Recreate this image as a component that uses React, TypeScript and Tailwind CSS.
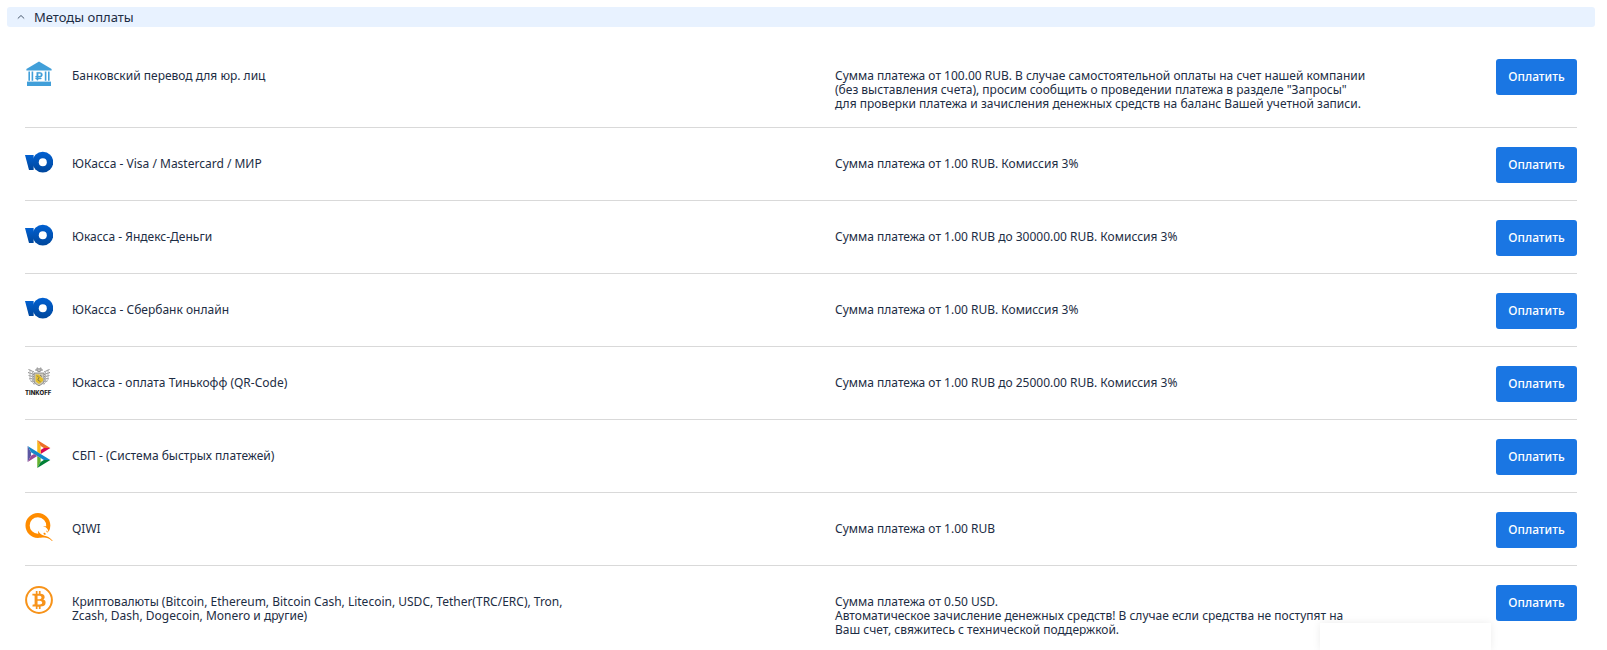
import type { ReactNode } from "react";
import { FaBtc, FaRubleSign } from "react-icons/fa";
import { SiQiwi } from "react-icons/si";

const BankIcon = () => (
    <svg viewBox="0 0 28 28" className="w-7 h-7 text-[#419fd9]" fill="currentColor" aria-hidden="true">
        <path d="M14 1.600 26.600 9v1.400H1.400V9z" />
        <path d="M3.400 11.600H5v9.200H3.400zM6.600 11.600h1.600v9.200H6.600zM19.800 11.600h1.600v9.200h-1.600zM23 11.600h1.600v9.200H23z" />
        <path d="M2 21.600h24V26H2z" />
        <FaRubleSign x={9.4} y={11.6} size={9.2} strokeWidth={20} stroke="currentColor" />
    </svg>
);

const YooIcon = () => (
    <svg viewBox="0 0 28 28" className="w-7 h-7" aria-hidden="true">
        <defs>
            <linearGradient id="yoo" x1="0" y1="0" x2="0" y2="1">
                <stop offset="0" stopColor="#0160d1" />
                <stop offset="1" stopColor="#00479c" />
            </linearGradient>
        </defs>
        <path d="M0 7h8.6v15H4z" fill="url(#yoo)" />
        <circle cx="17.8" cy="14.2" r="10.4" fill="url(#yoo)" />
        <circle cx="17.8" cy="14.2" r="4" fill="#fff" />
    </svg>
);

const TinkoffIcon = () => (
    <svg viewBox="0 0 28 28" className="w-7 h-7" aria-hidden="true">
        <g fill="none" stroke="#8c8c8c" strokeWidth="1">
            <path d="M3.5 2.5 9 5M3 5.5 9 7.5M3.6 8.5 9 9.8M4.4 11.5 9 12M5.8 14.5 10 14M8 17l3-2" />
            <path d="M24.5 2.5 19 5M25 5.5 19 7.5M24.4 8.5 19 9.8M23.6 11.5 19 12M22.2 14.5 18 14M20 17l-3-2" />
            <path d="M5 2.5v10.2l5 5M23 2.5v10.2l-5 5M7.5 4v11M20.5 4v11" stroke="#b5b5b5" />
            <path d="M10 3h8M12 .8l2 1.4 2-1.4v3l-2 1-2-1z" />
        </g>
        <path d="M9 6h10v7.4c0 2.6-2.4 4-5 5.4-2.6-1.4-5-2.8-5-5.4z" fill="#cfcabb" stroke="#7d7d7d" strokeWidth=".8" />
        <path d="M10.6 7.4H14l2.4 3 1.6 1.2V14l-4 3-3.4-2.6z" fill="#e3bf2c" />
        <path d="m12 8.6 2 2-1.200 2.400 2.800 1.800M15 8l2 1.600" fill="none" stroke="#6b6757" strokeWidth=".8" />
        <text x="0" y="27.600" fontFamily="Inter, sans-serif" fontSize="6" fontWeight="800" fill="#222">
            TINKOFF
        </text>
    </svg>
);

const SbpIcon = () => (
    <svg viewBox="0 0 97.3 120" className="w-7 h-7" aria-hidden="true">
        <path fill="#5b57a2" d="M0 26.12l14.532 25.975v15.844L.017 93.863z" />
        <path fill="#d90751" d="M55.797 42.643l13.617-8.346 27.868-.026-41.485 25.414z" />
        <path fill="#fab718" d="M55.72 25.967l.077 34.39-14.566-8.95V0z" />
        <path fill="#ed6f26" d="M97.282 34.271l-27.869.026-13.693-8.33L41.231 0z" />
        <path fill="#63b22f" d="M55.797 94.007V77.322l-14.566-8.78.008 51.458z" />
        <path fill="#1487c9" d="M69.38 85.737L14.531 52.095 0 26.12l97.223 59.583z" />
        <path fill="#017f36" d="M41.24 120l14.556-25.993 13.583-8.27 27.843-.034z" />
        <path fill="#984995" d="M.017 93.863l41.333-25.32-13.896-8.526-12.922 7.922z" />
    </svg>
);

const QiwiIcon = () => <SiQiwi className="w-7 h-7 text-[#ff8c00]" aria-hidden="true" />;

const BitcoinIcon = () => (
    <svg viewBox="0 0 28 28" className="w-7 h-7 text-[#f7931a]" aria-hidden="true">
        <circle cx="14" cy="14" r="12.900" fill="none" stroke="currentColor" strokeWidth="2" />
        <FaBtc x={5} y={5} size={18} />
    </svg>
);

type Method = { icon: ReactNode; name: ReactNode; desc?: ReactNode };

const methods: Method[] = [
    {
        icon: <BankIcon />,
        name: "Банковский перевод для юр. лиц",
        desc: (
            <>
                Сумма платежа от 100.00 RUB. В случае самостоятельной оплаты на счет нашей компании
                <br />
                (без выставления счета), просим сообщить о проведении платежа в разделе "Запросы"
                <br />
                для проверки платежа и зачисления денежных средств на баланс Вашей учетной записи.
            </>
        ),
    },
    { icon: <YooIcon />, name: "ЮКасса - Visa / Mastercard / МИР", desc: "Сумма платежа от 1.00 RUB. Комиссия 3%" },
    { icon: <YooIcon />, name: "Юкасса - Яндекс-Деньги", desc: "Сумма платежа от 1.00 RUB до 30000.00 RUB. Комиссия 3%" },
    { icon: <YooIcon />, name: "ЮКасса - Сбербанк онлайн", desc: "Сумма платежа от 1.00 RUB. Комиссия 3%" },
    { icon: <TinkoffIcon />, name: "Юкасса - оплата Тинькофф (QR-Code)", desc: "Сумма платежа от 1.00 RUB до 25000.00 RUB. Комиссия 3%" },
    { icon: <SbpIcon />, name: "СБП - (Система быстрых платежей)" },
    { icon: <QiwiIcon />, name: "QIWI", desc: "Сумма платежа от 1.00 RUB" },
    {
        icon: <BitcoinIcon />,
        name: (
            <>
                Криптовалюты (Bitcoin, Ethereum, Bitcoin Cash, Litecoin, USDC, Tether(TRC/ERC), Tron,
                <br />
                Zcash, Dash, Dogecoin, Monero и другие)
            </>
        ),
        desc: (
            <>
                Сумма платежа от 0.50 USD.
                <br />
                Автоматическое зачисление денежных средств! В случае если средства не поступят на
                <br />
                Ваш счет, свяжитесь с технической поддержкой.
            </>
        ),
    },
];

export default function App() {
    return (
        <main className="pl-[7px] pr-3 pt-[7px] bg-white font-['Noto_Sans','Open_Sans',sans-serif] text-[#1d2d44]">
            {/* заголовок секции */}
            <button type="button" aria-expanded="true" className="flex items-center gap-[9px] w-full h-5 pl-[10px] rounded-[3px] bg-[#e8f2ff] text-[13px] leading-5 text-left">
                <svg viewBox="0 0 8 8" className="w-2 h-2" fill="none" stroke="#4b5b70" aria-hidden="true">
                    <path d="M.8 5.500 4 2.500l3.200 3" />
                </svg>
                Методы оплаты
            </button>
            {/* список способов */}
            <ul className="px-[18px] pt-[13px] text-xs leading-[14px]">
                {methods.map((m, i) => (
                    <li key={i} className="grid grid-cols-[47px_763fr_661fr_81px] items-start pt-[19px] pb-[17px] border-b border-[#d9d9d9] last:border-b-0 last:pb-0">
                        <div className="pt-px">{m.icon}</div>
                        <div className="pt-[10px] -mb-px">{m.name}</div>
                        <div className="pt-[10px] -mb-px">{m.desc}</div>
                        <button type="button" className="h-9 rounded-[3px] bg-[#1a76e3] text-white text-xs font-medium">
                            Оплатить
                        </button>
                    </li>
                ))}
            </ul>
            {/* виджет чата */}
            <div className="fixed bottom-0 right-[116px] w-[171px] h-[27px] bg-white shadow-[0_0_8px_rgba(0,0,0,0.08)]" />
        </main>
    );
}
